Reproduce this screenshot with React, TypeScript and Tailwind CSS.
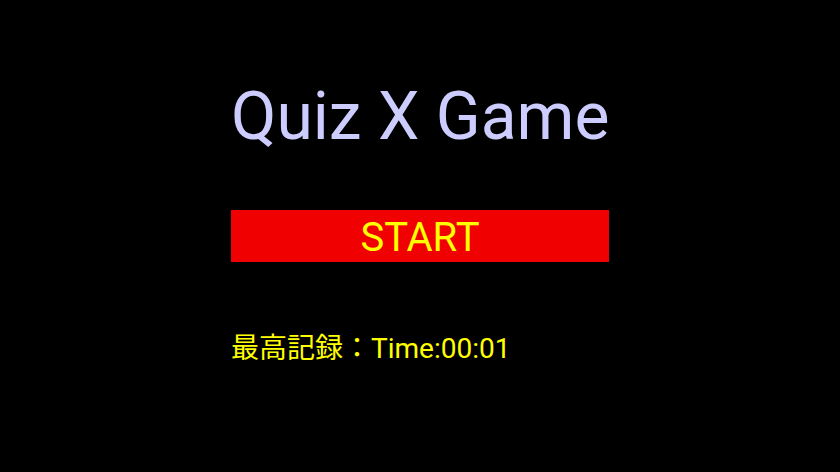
import React from "react";

export default function App() {
  return (
    <div className="w-[840px] h-[472px] bg-black flex justify-center" style={{ fontFamily: 'Roboto, "Noto Sans CJK JP", sans-serif' }}>
      <div className="w-[378px] flex flex-col pt-[81px]">
        <div className="text-center text-[66px] leading-[72px] text-[#ccccff] whitespace-nowrap">Quiz X Game</div>
        <div className="mt-[57px] h-[52px] bg-[#f00000] flex items-center justify-center pt-[3px] text-[40px] leading-[49px] text-[#ffff00]">START</div>
        <div className="mt-[71px] text-[28px] leading-[32px] text-[#ffff00] whitespace-nowrap">最高記録：Time:00:01</div>
      </div>
    </div>
  );
}
